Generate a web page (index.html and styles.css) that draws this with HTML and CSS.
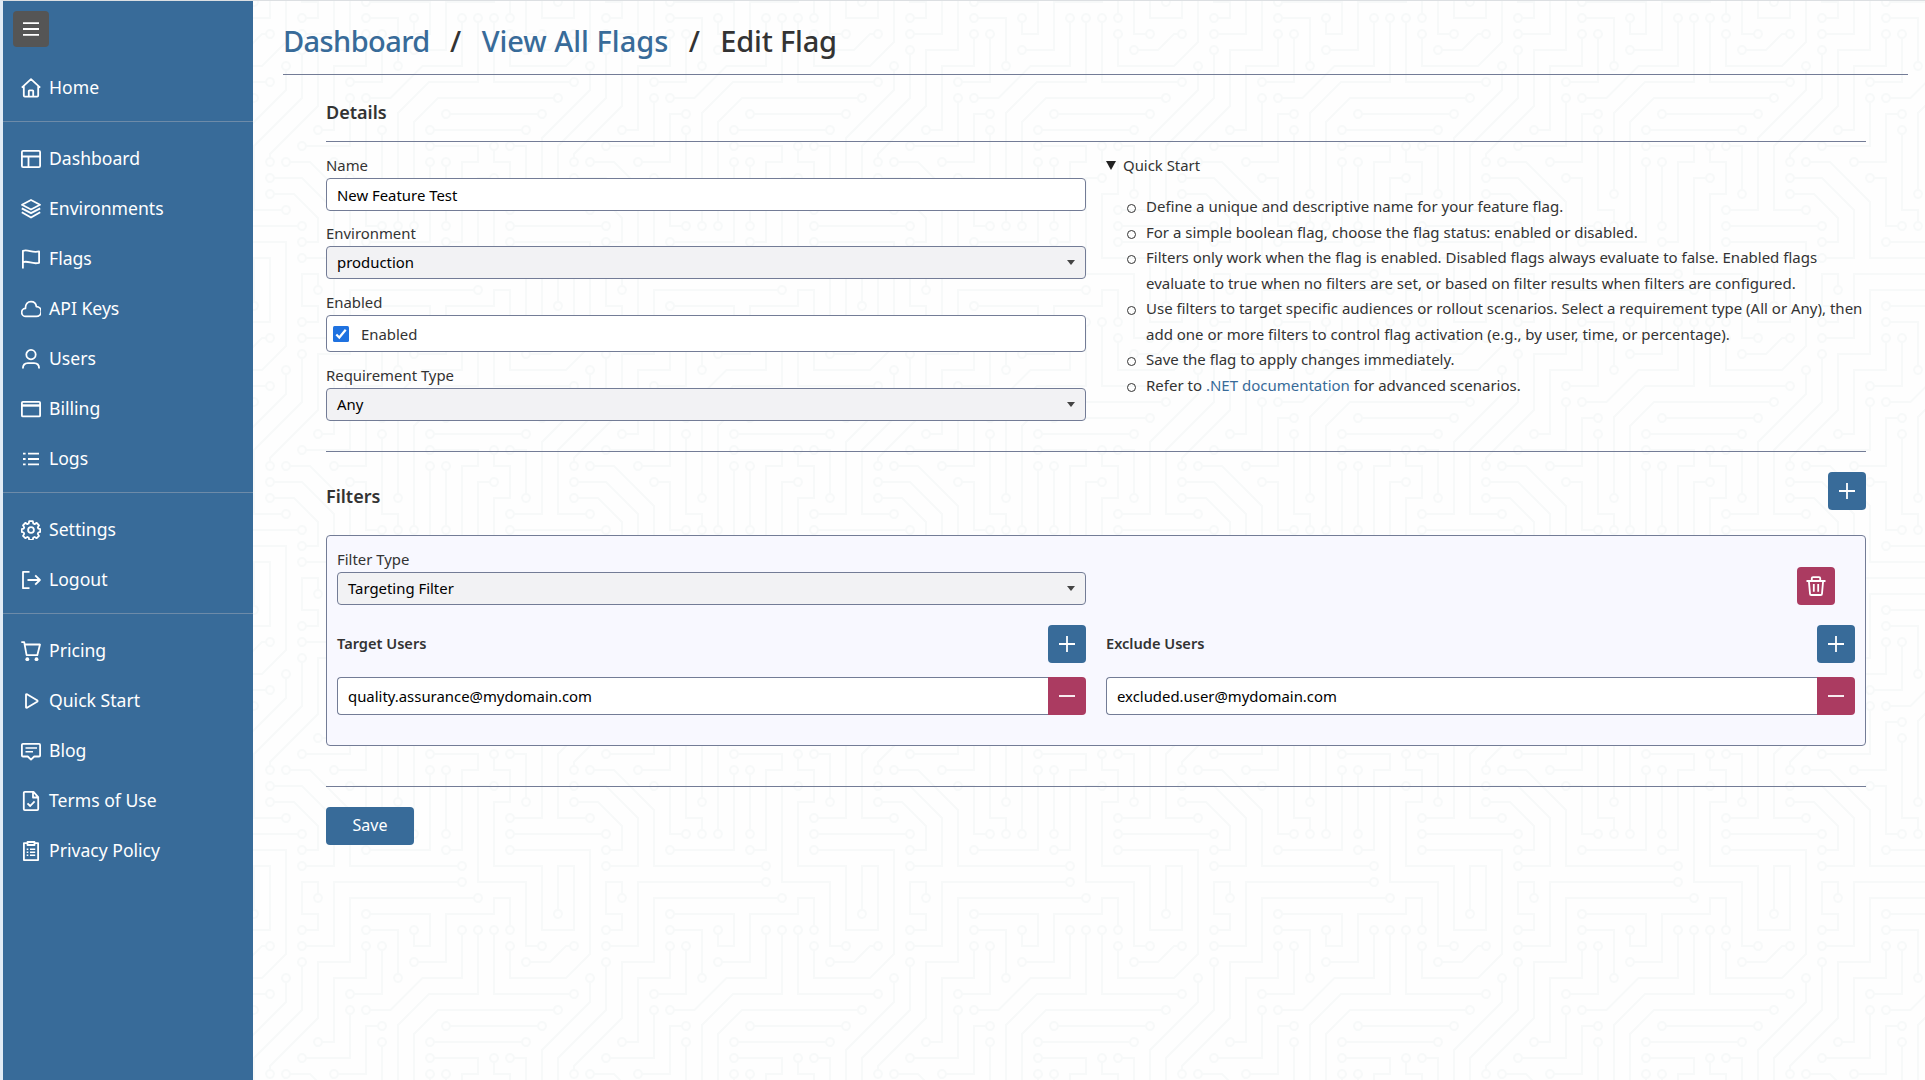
FILE: index.html
```
<!DOCTYPE html>
<html lang="en">
<head>
<meta charset="utf-8">
<title>Edit Flag</title>
<link rel="stylesheet" href="styles.css">
</head>
<body>
<div class="app">
  <aside class="sidebar">
    <button class="menu-btn" aria-label="Toggle menu"><svg class="icon" viewBox="0 0 20 20"><path d="M2 4.2h16M2 10h16M2 15.8h16"/></svg></button>
    <nav class="nav">
      <a class="nav-item"><svg class="icon" viewBox="0 0 20 20"><path d="M.8 9.6 10 1.2l9.200 8.400M2.800 8v9.600a1 1 0 0 0 1 1h12.400a1 1 0 0 0 1-1V8M7.800 18.400V13a.6.6 0 0 1 .6-.6h3.200a.6.6 0 0 1 .6.6v5.400"/></svg>Home</a>
      <hr>
      <a class="nav-item"><svg class="icon" viewBox="0 0 20 20"><rect x=".9" y="1.900" width="18.200" height="16.200" rx="1.200"/><path d="M1 7.500h18M7.500 7.500v10.500"/></svg>Dashboard</a>
      <a class="nav-item"><svg class="icon" viewBox="0 0 20 20"><path d="m10 1 9 4.800-9 4.700-9-4.700z"/><path d="m.8 9.400 9.200 4.800 9.200-4.800M.8 13.200l9.200 5.300 9.200-5.300" stroke-width="1.900"/></svg>Environments</a>
      <a class="nav-item"><svg class="icon" viewBox="0 0 20 20"><path d="M1.900 19.500V1.800c5.500-2 9 2.600 16.200.6v11.400c-7 2-10.700-2.600-16.200-.6"/></svg>Flags</a>
      <a class="nav-item"><svg class="icon" viewBox="0 0 20 20"><path d="M5 17.400a4 4 0 0 1-.6-8C4.400 5.200 6.800 2.600 10 2.600c3 0 5 2 5.400 5a4.800 4.800 0 0 1-.2 9.800z"/></svg>API Keys</a>
      <a class="nav-item"><svg class="icon" viewBox="0 0 20 20"><circle cx="10" cy="5.600" r="4.700"/><path d="M1.900 19.600c0-3.600 2-5.400 5-5.400h6.200c3 0 5 1.800 5 5.400"/></svg>Users</a>
      <a class="nav-item"><svg class="icon" viewBox="0 0 20 20"><rect x=".9" y="2.800" width="18.200" height="14.600" rx="1"/><path d="M1 6.500h18" stroke-width="2.400"/></svg>Billing</a>
      <a class="nav-item"><svg class="icon" viewBox="0 0 20 20"><path d="M7 4.700h11M7 10h11M7 15.300h11M2 4.700h2.600M2 10h2.600M2 15.300h2.600"/></svg>Logs</a>
      <hr>
      <a class="nav-item"><svg class="icon" viewBox="0 0 20 20"><circle cx="10" cy="10" r="2.900"/><path d="M8.200 1.200h3.600l.5 2.300 1.300.6 2.100-1.200 2.300 2.400-1.200 2.100.5 1.200 2 .5v2.800l-2 .6-.5 1.400 1.200 2-2.300 2.300-2.100-1.200-1.300.5-.5 2.300H8.200l-.5-2.300-1.300-.5-2.100 1.200L2 15.900l1.200-2-.5-1.400-2-.6V9.100l2-.5.5-1.200L2 5.300l2.300-2.400 2.100 1.200 1.300-.6z"/></svg>Settings</a>
      <a class="nav-item"><svg class="icon" viewBox="0 0 20 20"><path d="M8.500 1.800H2v16.400h6.500M6.500 10h12M14.200 5.300 18.900 10l-4.700 4.700"/></svg>Logout</a>
      <hr>
      <a class="nav-item"><svg class="icon" viewBox="0 0 20 20"><path d="M.3 1.200h2.900l2.400 13h10.700L19 3.500H4"/><circle class="dot" cx="6.300" cy="18.200" r="1.900"/><circle class="dot" cx="15.500" cy="18.200" r="1.900"/></svg>Pricing</a>
      <a class="nav-item"><svg class="icon" viewBox="0 0 20 20"><path d="M5 3.400v13.200l1 .2 10.500-6.400v-.8L6 3.200z"/></svg>Quick Start</a>
      <a class="nav-item"><svg class="icon" viewBox="0 0 20 20"><path d="M2 2.800h16a1.100 1.100 0 0 1 1.100 1.100v10.500a1.100 1.100 0 0 1-1.100 1.100h-4.800L10 18.600l-3.200-3.100H2a1.100 1.100 0 0 1-1.100-1.100V3.900A1.100 1.100 0 0 1 2 2.800z"/><path d="M4.500 7h11.500M4.500 10.700h7.500" stroke-width="1.500"/></svg>Blog</a>
      <a class="nav-item"><svg class="icon" viewBox="0 0 20 20"><path d="M3.800.9h8.700l4.700 5.300v11.900a1 1 0 0 1-1 1H3.800a1 1 0 0 1-1-1V1.900a1 1 0 0 1 1-1zM12 1v5.500h5M6.500 12.300l2.700 2.700 4.400-4.700"/></svg>Terms of Use</a>
      <a class="nav-item"><svg class="icon" viewBox="0 0 20 20"><path d="M6.200 2.200H2.900v16.900h14.200V2.200h-3.300M6.500 1h7v3h-7z"/><path d="M9 8.300h5.200M9 11.300h5.200M9 14.300h5.200M5.700 8.300h1.600M5.700 11.300h1.600M5.700 14.300h1.600" stroke-width="1.500"/></svg>Privacy Policy</a>
    </nav>
  </aside>

  <main class="main">
    <h1 class="crumbs"><a class="c1">Dashboard</a><span class="sep">/</span><a class="c2">View All Flags</a><span class="sep">/</span><span class="c3">Edit Flag</span></h1>

    <div class="content">
      <h2 class="title">Details</h2>
      <section class="details">
        <form class="fields">
          <label>Name</label>
          <input class="control" type="text" value="New Feature Test">
          <label>Environment</label>
          <div class="select">production</div>
          <label>Enabled</label>
          <div class="check"><svg class="box" viewBox="0 0 16 16"><rect width="16" height="16" rx="1.500"/><path d="m3.300 8.500 3 3 6.400-7.700"/></svg>Enabled</div>
          <label>Requirement Type</label>
          <div class="select">Any</div>
        </form>
        <div class="help">
          <div class="summary"><span class="tri"></span>Quick Start</div>
          <ul>
            <li>Define a unique and descriptive name for your feature flag.</li>
            <li>For a simple boolean flag, choose the flag status: enabled or disabled.</li>
            <li>Filters only work when the flag is enabled. Disabled flags always evaluate to false. Enabled flags<br>evaluate to true when no filters are set, or based on filter results when filters are configured.</li>
            <li>Use filters to target specific audiences or rollout scenarios. Select a requirement type (All or Any), then<br>add one or more filters to control flag activation (e.g., by user, time, or percentage).</li>
            <li>Save the flag to apply changes immediately.</li>
            <li>Refer to <a>.NET documentation</a> for advanced scenarios.</li>
          </ul>
        </div>
      </section>

      <section class="filters">
        <div class="filters-head">
          <h2>Filters</h2>
          <button class="btn"><svg class="icon" viewBox="0 0 20 20"><path d="M2 10h16M10 2v16"/></svg></button>
        </div>
        <div class="card">
          <div class="type-row">
            <div class="type">
              <label>Filter Type</label>
              <div class="select">Targeting Filter</div>
            </div>
            <button class="btn danger"><svg class="icon" viewBox="0 0 20 20"><path d="M.5 5h19M5.800 4.800V2.300c0-.8.4-1.200 1.200-1.200h6c.8 0 1.200.4 1.200 1.200v2.500M2.900 5.200l1.100 12.500c0 .8.500 1.300 1.300 1.300h9.400c.8 0 1.300-.5 1.300-1.300l1.100-12.500M7.800 8v7.800M12.200 8v7.800"/></svg></button>
          </div>
          <div class="users">
            <div>
              <div class="users-head"><h3>Target Users</h3><button class="btn"><svg class="icon" viewBox="0 0 20 20"><path d="M2 10h16M10 2v16"/></svg></button></div>
              <div class="group"><input class="control" type="text" value="quality.assurance@mydomain.com"><button class="btn danger"><svg class="icon" viewBox="0 0 20 20"><path d="M2 10h16"/></svg></button></div>
            </div>
            <div>
              <div class="users-head"><h3>Exclude Users</h3><button class="btn"><svg class="icon" viewBox="0 0 20 20"><path d="M2 10h16M10 2v16"/></svg></button></div>
              <div class="group"><input class="control" type="text" value="excluded.user@mydomain.com"><button class="btn danger"><svg class="icon" viewBox="0 0 20 20"><path d="M2 10h16"/></svg></button></div>
            </div>
          </div>
        </div>
      </section>

      <div class="actions"><button class="save">Save</button></div>
    </div>
  </main>
</div>
</body>
</html>
```
FILE: styles.css
```
* { box-sizing: border-box; }
body {
  margin: 0;
  height: 1080px;
  overflow: hidden;
  font: 14.9px/22px "Noto Sans", sans-serif;
  color: #333;
  background: #fff;
}
h1, h2, h3, ul, hr { margin: 0; padding: 0; }
a { color: #386b99; }
button { border: 0; padding: 0; font: inherit; color: #fff; }
.icon {
  width: 20px;
  height: 20px;
  flex: none;
  fill: none;
  stroke: currentColor;
  stroke-width: 1.8;
  stroke-linejoin: round;
}
.icon .dot { fill: currentColor; stroke: none; }

.app {
  display: flex;
  height: 1080px;
  border-top: 1px solid #dcdfe2;
  border-left: 3px solid #e3ecf5;
}

/* Sidebar */
.sidebar { width: 250px; flex: none; background: #386b99; padding-top: 10px; }
.menu-btn {
  display: grid;
  place-items: center;
  width: 36px;
  height: 36px;
  margin-left: 10px;
  border-radius: 4px;
  background: #555;
}
.nav { padding-top: 16px; }
.nav-item {
  display: flex;
  align-items: center;
  gap: 8px;
  height: 50px;
  padding: 0 0 2px 18px;
  color: #fff;
  font-size: 17.6px;
}
.nav-item .icon { margin-top: 2px; }
.nav hr { border: 0; height: 1px; background: #6d8ba9; margin: 8px 0 12px; }

/* Main */
.main {
  flex: 1;
  padding: 0 17px 0 30px;
  background-color: #fefefe;
  background-image: url("data:image/svg+xml,%3Csvg xmlns='http://www.w3.org/2000/svg' width='304' height='304' viewBox='0 0 304 304'%3E%3Cpath fill='%23f7f9f9' d='M44.1 224a5 5 0 1 1 0 2H0v-2h44.1zm160 48a5 5 0 1 1 0 2H82v-2h122.1zm57.8-46a5 5 0 1 1 0-2H304v2h-42.1zm0 16a5 5 0 1 1 0-2H304v2h-42.1zm6.2-114a5 5 0 1 1 0 2h-86.2a5 5 0 1 1 0-2h86.2zm-256-48a5 5 0 1 1 0 2H0v-2h12.1zm185.8 34a5 5 0 1 1 0-2h86.2a5 5 0 1 1 0 2h-86.2zM258 12.1a5 5 0 1 1-2 0V0h2v12.1zm-64 208a5 5 0 1 1-2 0v-54.2a5 5 0 1 1 2 0v54.2zm48-198.2V80h62v2h-64V21.9a5 5 0 1 1 2 0zm16 16V64h46v2h-48V37.9a5 5 0 1 1 2 0zm-128 96V208h16v12.1a5 5 0 1 1-2 0V210h-16v-76.1a5 5 0 1 1 2 0zm-5.9-21.9a5 5 0 1 1 0 2H114v48H85.9a5 5 0 1 1 0-2H112v-48h12.1zm-6.2 130a5 5 0 1 1 0-2H176v-74.1a5 5 0 1 1 2 0V242h-60.1zm-16-64a5 5 0 1 1 0-2H114v48h10.1a5 5 0 1 1 0 2H112v-48h-10.1zM66 284.1a5 5 0 1 1-2 0V274H50v30h-2v-32h18v12.1zM236.1 176a5 5 0 1 1 0 2H226v94h48v32h-2v-30h-48v-98h12.1zm25.8-30a5 5 0 1 1 0-2H274v44.1a5 5 0 1 1-2 0V146h-10.1zm-64 96a5 5 0 1 1 0-2H208v-80h16v-14h-42.1a5 5 0 1 1 0-2H226v18h-16v80h-12.1zm86.2-210a5 5 0 1 1 0 2H272V0h2v32h10.1zM98 101.9V146H53.9a5 5 0 1 1 0-2H96v-42.1a5 5 0 1 1 2 0zM53.9 34a5 5 0 1 1 0-2H80V0h2v34H53.9zm60.1 3.9V66H82v64H69.9a5 5 0 1 1 0-2H80V64h32V37.9a5 5 0 1 1 2 0zM101.9 82a5 5 0 1 1 0-2H128V37.9a5 5 0 1 1 2 0V82h-28.1zm16-64a5 5 0 1 1 0-2H146v44.1a5 5 0 1 1-2 0V18h-26.1zm102.2 270a5 5 0 1 1 0 2H98v14h-2v-16h124.1zM242 149.9V160h16v34h-16v62h48v48h-2v-46h-48v-66h16v-30h-16v-12.1a5 5 0 1 1 2 0zM53.9 18a5 5 0 1 1 0-2H64V2H48V0h18v18H53.9zm112 32a5 5 0 1 1 0-2H192V0h50v2h-48v48h-28.1zm-48-48a5 5 0 0 1-9.8-2h2.07a3 3 0 1 0 5.66 0H178v34h-18V21.9a5 5 0 1 1 2 0V32h14V2h-58.1zm0 96a5 5 0 1 1 0-2H137l32-32h39V21.9a5 5 0 1 1 2 0V66h-40.17l-32 32H117.9zm28.1 90.1a5 5 0 1 1-2 0v-76.51L175.59 80H224V21.9a5 5 0 1 1 2 0V82h-49.59L146 112.41v75.69zm16 32a5 5 0 1 1-2 0v-99.51L184.59 96H300.1a5 5 0 0 1 3.9-3.9v2.07a3 3 0 0 0 0 5.66v2.07a5 5 0 0 1-3.9-3.9H185.41L162 121.41v98.69zm-144-64a5 5 0 1 1-2 0v-3.51l48-48V48h32V0h2v50H66v55.41l-48 48v2.69zM50 53.9v43.51l-48 48V208h26.1a5 5 0 1 1 0 2H0v-65.41l48-48V53.9a5 5 0 1 1 2 0zm-16 16V89.41l-34 34v-2.82l32-32V69.9a5 5 0 1 1 2 0zM12.1 32a5 5 0 1 1 0 2H9.41L0 43.41V40.6L8.59 32h3.51zm265.8 18a5 5 0 1 1 0-2h18.69l7.41-7.41v2.82L297.41 50H277.9zm-16 160a5 5 0 1 1 0-2H288v-71.41l16-16v2.82l-14 14V210h-28.1zm-208 32a5 5 0 1 1 0-2H64v-22.59L40.59 194H21.9a5 5 0 1 1 0-2H41.41L66 216.59V242H53.9zm150.2 14a5 5 0 1 1 0 2H96v-56.6L56.6 162H37.9a5 5 0 1 1 0-2h19.5L98 200.6V256h106.1zm-150.2 2a5 5 0 1 1 0-2H80v-46.59L48.59 178H21.9a5 5 0 1 1 0-2H49.41L82 208.59V258H53.9zM34 39.8v1.61L9.41 66H0v-2h8.59L32 40.59V0h2v39.8zM2 300.1a5 5 0 0 1 3.9 3.9H3.83A3 3 0 0 0 0 302.17V256h18v48h-2v-46H2v42.1zM34 241v63h-2v-62H0v-2h34v1zM17 18H0v-2h16V0h2v18h-1zm273-2h14v2h-16V0h2v16zm-32 273v15h-2v-14h-14v14h-2v-16h18v1zM0 92.1A5.02 5.02 0 0 1 6 97a5 5 0 0 1-6 4.9v-2.07a3 3 0 1 0 0-5.66V92.1zM80 272h2v32h-2v-32zm37.9 32h-2.07a3 3 0 0 0-5.66 0h-2.07a5 5 0 0 1 9.8 0zM5.9 0A5.02 5.02 0 0 1 0 5.9V3.83A3 3 0 0 0 3.83 0H5.9zm294.2 0h2.07A3 3 0 0 0 304 3.83V5.9a5 5 0 0 1-3.9-5.9zm3.9 300.1v2.07a3 3 0 0 0-1.83 1.83h-2.07a5 5 0 0 1 3.9-3.9z'/%3E%3Cpath stroke='%23fefefe' stroke-width='6' stroke-linecap='round' d='M49 225h0M209 273h0M257 225h0M257 241h0M273 129h0M177 129h0M17 81h0M193 113h0M289 113h0M257 17h0M193 225h0M193 161h0M241 17h0M257 33h0M145 225h0M129 129h0M129 113h0M81 161h0M113 241h0M177 161h0M97 177h0M129 225h0M65 289h0M241 177h0M257 145h0M273 193h0M193 241h0M177 145h0M289 33h0M97 97h0M49 145h0M49 33h0M113 33h0M65 129h0M97 81h0M129 33h0M113 17h0M145 65h0M225 289h0M241 145h0M49 17h0M161 49h0M161 17h0M113 97h0M209 17h0M145 193h0M225 17h0M161 225h0M17 161h0M49 49h0M33 209h0M33 65h0M17 33h0M273 49h0M257 209h0M49 241h0M17 193h0M209 257h0M33 161h0M49 257h0M17 177h0'/%3E%3C/svg%3E");
}
.crumbs {
  display: flex;
  align-items: center;
  height: 74px;
  padding: 14px 0 8px;
  border-bottom: 1px solid #737c96;
  font-size: 29px;
  line-height: 40px;
  font-weight: 500;
}
.crumbs .c1 { letter-spacing: -.6px; }
.crumbs .c3 { letter-spacing: -.2px; }
.sep { width: 52px; text-align: center; }
.content { padding: 0 42px 0 43px; }
h2 { font-size: 18px; line-height: 26px; font-weight: 600; }
.title { padding: 24px 0 16px; border-bottom: 1px solid #737c96; }

.details {
  display: grid;
  grid-template-columns: 760px 760px;
  gap: 20px;
  height: 310px;
  padding-top: 12px;
  border-bottom: 1px solid #737c96;
}
label { display: block; height: 24px; }
.control, .select {
  display: block;
  width: 100%;
  height: 33px;
  padding: 0 10px;
  border: 1px solid #737c96;
  border-radius: 4px;
  background: #fff;
  font: 14.9px/31px "Noto Sans", sans-serif;
  color: #000;
}
.select {
  display: flex;
  justify-content: space-between;
  align-items: center;
  padding-right: 10px;
  background: #f2f2f4;
}
.select::after {
  content: "";
  border: 4px solid transparent;
  border-top: 5px solid #444;
  border-bottom: 0;
}
.fields .control { margin-bottom: 11px; }
.fields .select, .check { margin-bottom: 12px; }
.check {
  display: flex;
  align-items: center;
  gap: 12px;
  height: 37px;
  padding-left: 6px;
  border: 1px solid #737c96;
  border-radius: 4px;
  background: #fff;
}
.box { width: 16px; height: 16px; fill: #1f72e0; }
.box path { fill: none; stroke: #fff; stroke-width: 2.2; }

.summary { display: flex; align-items: center; gap: 7px; height: 22px; }
.tri { border: 5px solid transparent; border-top: 9px solid #222; border-bottom: 0; }
.help ul {
  list-style: none;
  padding: 18px 0 0 40px;
  font-size: 15px;
  line-height: 25.55px;
  white-space: nowrap;
}
.help li { position: relative; }
.help li::before {
  content: "";
  position: absolute;
  left: -19px;
  top: 10px;
  width: 7px;
  height: 7px;
  border: 1px solid #333;
  border-radius: 50%;
}

/* Filters */
.filters { height: 335px; border-bottom: 1px solid #737c96; }
.filters-head { display: flex; justify-content: space-between; height: 83px; padding: 20px 0 25px; }
.filters-head h2 { padding-top: 11px; }
.btn {
  display: grid;
  place-items: center;
  flex: none;
  width: 38px;
  height: 38px;
  border-radius: 4px;
  background: #386b99;
}
.danger { background: #ab3b61; }
.card {
  height: 211px;
  padding: 12px 10px 0;
  border: 1px solid #737c96;
  border-radius: 4px;
  background: #f8f8ff;
}
.type-row { display: flex; justify-content: space-between; align-items: flex-end; padding-right: 20px; }
.type { width: 749px; }
.users { display: grid; grid-template-columns: 749px 749px; gap: 20px; padding-top: 20px; }
.users-head { display: flex; justify-content: space-between; align-items: center; height: 38px; margin-bottom: 14px; }
h3 { font-size: 14.6px; font-weight: 600; padding-bottom: 2px; }
.group { display: flex; }
.group .control { flex: 1; height: 38px; border-right: 0; border-radius: 4px 0 0 4px; }
.group .btn { border-radius: 0 4px 4px 0; }

.actions { padding-top: 20px; }
.save { width: 88px; height: 38px; padding-bottom: 2px; border-radius: 4px; background: #386b99; font-size: 16px; }
```
